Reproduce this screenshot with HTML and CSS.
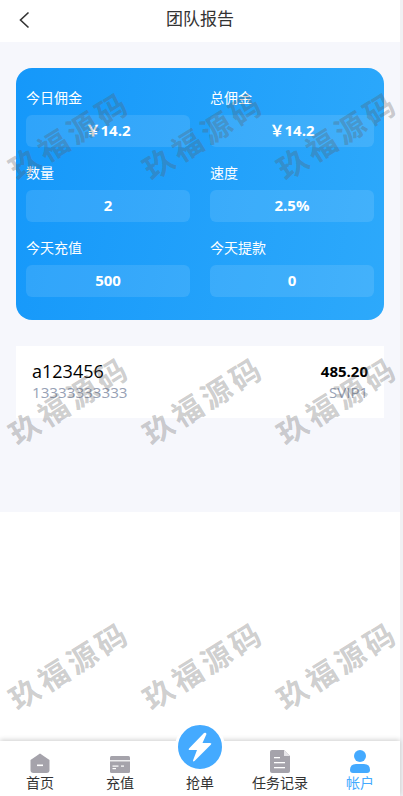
FILE: index.html
```html
<!DOCTYPE html>
<html lang="zh-CN">
<head>
    <meta charset="UTF-8">
    <meta name="viewport" content="width=device-width, initial-scale=1.0">
    <title>团队报告</title>
    <link rel="stylesheet" href="styles.css">
</head>
<body>
    <div class="page">
        <div class="header">
            <svg class="back" width="14" height="18" viewBox="0 0 14 18"><path d="M11.5 1.5 L3.5 9 L11.5 16.5" fill="none" stroke="#333" stroke-width="1.6"/></svg>
            <span class="header-title">团队报告</span>
        </div>

        <div class="content">
            <div class="report-card">
                <div class="stat">
                    <div class="stat-label">今日佣金</div>
                    <div class="stat-value">￥14.2</div>
                </div>
                <div class="stat">
                    <div class="stat-label">总佣金</div>
                    <div class="stat-value">￥14.2</div>
                </div>
                <div class="stat">
                    <div class="stat-label">数量</div>
                    <div class="stat-value">2</div>
                </div>
                <div class="stat">
                    <div class="stat-label">速度</div>
                    <div class="stat-value">2.5%</div>
                </div>
                <div class="stat">
                    <div class="stat-label">今天充值</div>
                    <div class="stat-value">500</div>
                </div>
                <div class="stat">
                    <div class="stat-label">今天提款</div>
                    <div class="stat-value">0</div>
                </div>
            </div>

            <div class="member">
                <div>
                    <div class="member-name">a123456</div>
                    <div class="member-phone">13333333333</div>
                </div>
                <div class="member-right">
                    <div class="member-money">485.20</div>
                    <div class="member-level">SVIP1</div>
                </div>
            </div>
        </div>

        <div class="tabbar">
            <div class="tab">
                <svg width="20" height="20" viewBox="0 0 20 20"><path d="M10 0.5 L19.5 7 V17 Q19.5 20 16.5 20 H3.5 Q0.5 20 0.5 17 V7 Z" fill="#a5a3ab"/><rect x="7" y="11.5" width="6" height="1.6" fill="#fff"/></svg>
                <span>首页</span>
            </div>
            <div class="tab">
                <svg width="20" height="17" viewBox="0 0 20 17"><rect width="20" height="17" rx="1.5" fill="#a5a3ab"/><rect y="4.2" width="20" height="1.2" fill="#fff"/><rect x="2.5" y="9.5" width="6" height="1.2" fill="#fff"/><rect x="11" y="9.5" width="3" height="1.2" fill="#fff"/><rect x="2.5" y="12" width="3.5" height="1.2" fill="#fff"/></svg>
                <span>充值</span>
            </div>
            <div class="tab tab-center">
                <div class="bolt">
                    <svg width="26" height="30" viewBox="0 0 26 30"><path d="M17 1 L2 16.5 Q1 18 3 18 L10 18 L6 28.5 Q6 30 7.5 29 L24 12.5 Q25 11 23 11 L15.5 11 L19.5 2 Q19 0 17 1 Z" fill="#fff"/></svg>
                </div>
                <span>抢单</span>
            </div>
            <div class="tab">
                <svg width="20" height="23" viewBox="0 0 20 23"><path d="M2 0 H14 L20 6 V21 Q20 23 18 23 H2 Q0 23 0 21 V2 Q0 0 2 0 Z" fill="#a5a3ab"/><path d="M14 0 L20 6 H14 Z" fill="#e6e5e9"/><rect x="4" y="7" width="6" height="1.3" fill="#fff"/><rect x="4" y="12" width="11" height="1.3" fill="#fff"/><rect x="4" y="17" width="11" height="1.3" fill="#fff"/></svg>
                <span>任务记录</span>
            </div>
            <div class="tab tab-active">
                <svg width="20" height="23" viewBox="0 0 20 23"><circle cx="10" cy="6" r="6" fill="#44aaff"/><path d="M0 20 Q0 14 6 14 H14 Q20 14 20 20 Q20 23 17 23 H3 Q0 23 0 20 Z" fill="#44aaff"/></svg>
                <span>帐户</span>
            </div>
        </div>

        <!-- 水印 -->
        <div class="watermark">
            <span>玖福源码</span><span>玖福源码</span><span>玖福源码</span>
            <span>玖福源码</span><span>玖福源码</span><span>玖福源码</span>
            <span>玖福源码</span><span>玖福源码</span><span>玖福源码</span>
        </div>
    </div>
</body>
</html>
```

FILE: styles.css
```css
html, body {
    margin: 0;
    padding: 0;
    height: 100%;
    overflow: hidden;
    background: #f1f1f4;
}
body {
    font-family: "Open Sans", "Noto Sans CJK SC", sans-serif;
}
.page {
    position: relative;
    width: 400px;
    height: 796px;
    background: #fff;
    display: flex;
    flex-direction: column;
}
.header {
    height: 42px;
    box-sizing: border-box;
    padding-bottom: 4px;
    flex: none;
    display: flex;
    align-items: center;
    justify-content: center;
    position: relative;
    background: #fff;
}
.back {
    position: absolute;
    left: 17px;
    top: 11px;
}
.header-title {
    font-size: 17px;
    line-height: 24px;
    color: #333;
}
.content {
    height: 470px;
    flex: none;
    box-sizing: border-box;
    padding: 26px 16px 0;
    background: #f6f7fc;
}
.report-card {
    height: 252px;
    box-sizing: border-box;
    padding: 19px 10px 0;
    border-radius: 16px;
    background: linear-gradient(100deg, #1598fa, #2da9fb);
    display: grid;
    grid-template-columns: 164px 164px;
    grid-auto-rows: 75px;
    column-gap: 20px;
}
.stat-label {
    height: 28px;
    line-height: 21px;
    font-size: 14px;
    color: #fff;
}
.stat-value {
    height: 32px;
    line-height: 31px;
    border-radius: 6px;
    background: rgba(255, 255, 255, 0.11);
    text-align: center;
    font-size: 15px;
    font-weight: 700;
    color: #fff;
}
.member {
    height: 72px;
    box-sizing: border-box;
    margin-top: 26px;
    padding: 14px 16px 0;
    background: #fff;
    display: flex;
    justify-content: space-between;
}
.member-name {
    font-size: 18px;
    line-height: 22px;
    color: #000;
}
.member-phone {
    margin-top: 1px;
    font-size: 15.2px;
    line-height: 18px;
    color: #97a1b5;
}
.member-right {
    text-align: right;
}
.member-money {
    font-size: 15px;
    font-weight: 700;
    line-height: 22px;
    color: #000;
}
.member-level {
    margin-top: 1px;
    font-size: 15px;
    line-height: 18px;
    color: #97a1b5;
}
.tabbar {
    position: absolute;
    left: 0;
    right: 0;
    bottom: 0;
    height: 55px;
    background: #fff;
    box-shadow: 0 -1px 5px rgba(0, 0, 0, 0.2);
    display: flex;
}
.tab {
    flex: 1;
    height: 55px;
    box-sizing: border-box;
    padding-bottom: 3px;
    display: flex;
    flex-direction: column;
    align-items: center;
    justify-content: flex-end;
    font-size: 14px;
    line-height: 20px;
    color: #333;
}
.tab svg {
    display: block;
}
.tab-active {
    color: #44aaff;
}
.tab-center {
    position: relative;
}
.bolt {
    position: absolute;
    left: 50%;
    top: -19px;
    margin-left: -25px;
    width: 44px;
    height: 44px;
    border: 3px solid #fff;
    border-radius: 50%;
    background: #44aaff;
    display: flex;
    align-items: center;
    justify-content: center;
}
.watermark {
    position: absolute;
    left: 0;
    top: 0;
    width: 403px;
    height: 796px;
    overflow: hidden;
    display: grid;
    grid-template-columns: repeat(3, 134px);
    grid-template-rows: repeat(3, 265px);
    padding-top: 2px;
    box-sizing: border-box;
    pointer-events: none;
}
.watermark span {
    display: flex;
    align-items: center;
    justify-content: center;
    padding-left: 3px;
    font-size: 30px;
    font-weight: 700;
    letter-spacing: 4px;
    white-space: nowrap;
    color: rgba(90, 90, 90, 0.3);
    transform: rotate(-32deg);
}
```
